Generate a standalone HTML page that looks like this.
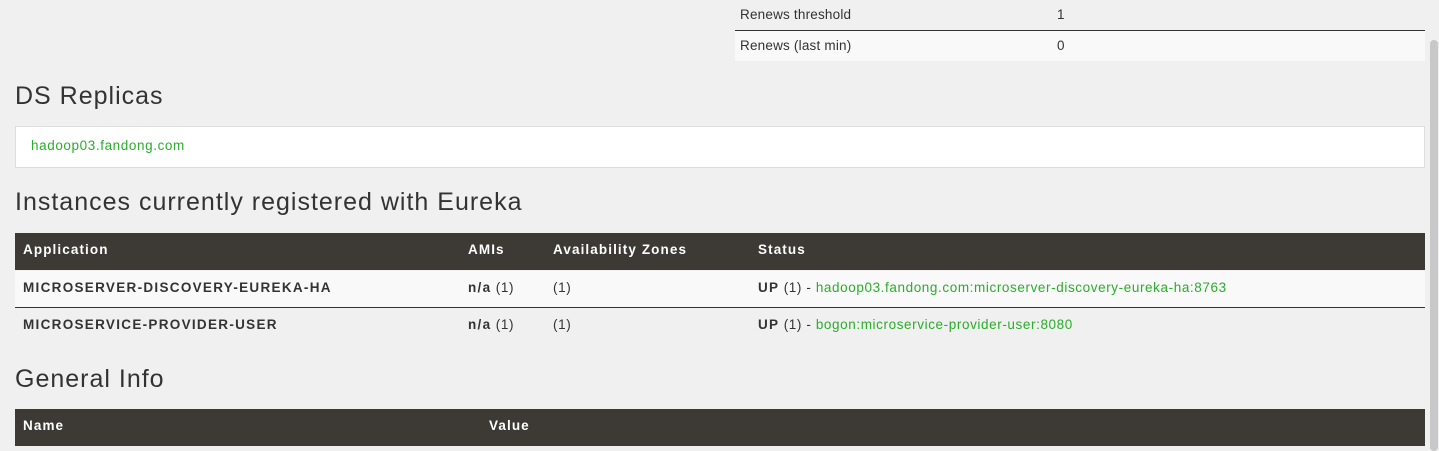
<!DOCTYPE html>
<html><head><style>
body{margin:0;background:#f0f0f0;font-family:"Liberation Sans",sans-serif;color:#333;width:1439px;height:451px;overflow:hidden;position:relative;font-size:13.5px;letter-spacing:0.6px}
.a{position:absolute;white-space:nowrap}
h2{position:absolute;margin:0;font-weight:normal;font-size:25px;color:#333;left:15px;letter-spacing:1px}
.g{color:#2bad2b}
.hd{background:#3d3935;color:#fff;font-weight:bold}
b{font-weight:bold;letter-spacing:1.3px}
.h{color:#fff;font-weight:bold;letter-spacing:1.1px}
</style></head><body>
<div class="a" style="left:735px;top:0;width:690px;height:30px;border-bottom:1px solid #333"></div>
<div class="a" style="left:740px;top:7px;letter-spacing:0.2px">Renews threshold</div>
<div class="a" style="left:1057px;top:7px">1</div>
<div class="a" style="left:735px;top:31px;width:690px;height:30px;background:#f9f9f9"></div>
<div class="a" style="left:740px;top:38px;letter-spacing:0.2px">Renews (last min)</div>
<div class="a" style="left:1057px;top:38px">0</div>

<h2 style="top:82px">DS Replicas</h2>
<div class="a" style="left:15px;top:126px;width:1408px;height:40px;background:#fff;border:1px solid #ddd"></div>
<div class="a g" style="left:31px;top:138px">hadoop03.fandong.com</div>

<h2 style="top:188px">Instances currently registered with Eureka</h2>
<div class="a hd" style="left:15px;top:233px;width:1410px;height:37px"></div>
<div class="a h" style="left:23px;top:242px">Application</div>
<div class="a h" style="left:468px;top:242px">AMIs</div>
<div class="a h" style="left:553px;top:242px">Availability Zones</div>
<div class="a h" style="left:758px;top:242px">Status</div>
<div class="a" style="left:15px;top:271px;width:1410px;height:36px;background:#f9f9f9;border-bottom:1px solid #333"></div>
<div class="a" style="left:23px;top:280px"><b>MICROSERVER-DISCOVERY-EUREKA-HA</b></div>
<div class="a" style="left:468px;top:280px"><b>n/a</b> (1)</div>
<div class="a" style="left:553px;top:280px">(1)</div>
<div class="a" style="left:758px;top:280px"><b>UP</b> (1) - <span class="g">hadoop03.fandong.com:microserver-discovery-eureka-ha:8763</span></div>
<div class="a" style="left:23px;top:317px"><b>MICROSERVICE-PROVIDER-USER</b></div>
<div class="a" style="left:468px;top:317px"><b>n/a</b> (1)</div>
<div class="a" style="left:553px;top:317px">(1)</div>
<div class="a" style="left:758px;top:317px"><b>UP</b> (1) - <span class="g">bogon:microservice-provider-user:8080</span></div>

<h2 style="top:365px">General Info</h2>
<div class="a hd" style="left:15px;top:409px;width:1410px;height:37px"></div>
<div class="a h" style="left:23px;top:418px">Name</div>
<div class="a h" style="left:489px;top:418px">Value</div>

<div class="a" style="left:1430px;top:40px;width:8px;height:411px;background:#c8c8c8;border-radius:4px"></div>
</body></html>
